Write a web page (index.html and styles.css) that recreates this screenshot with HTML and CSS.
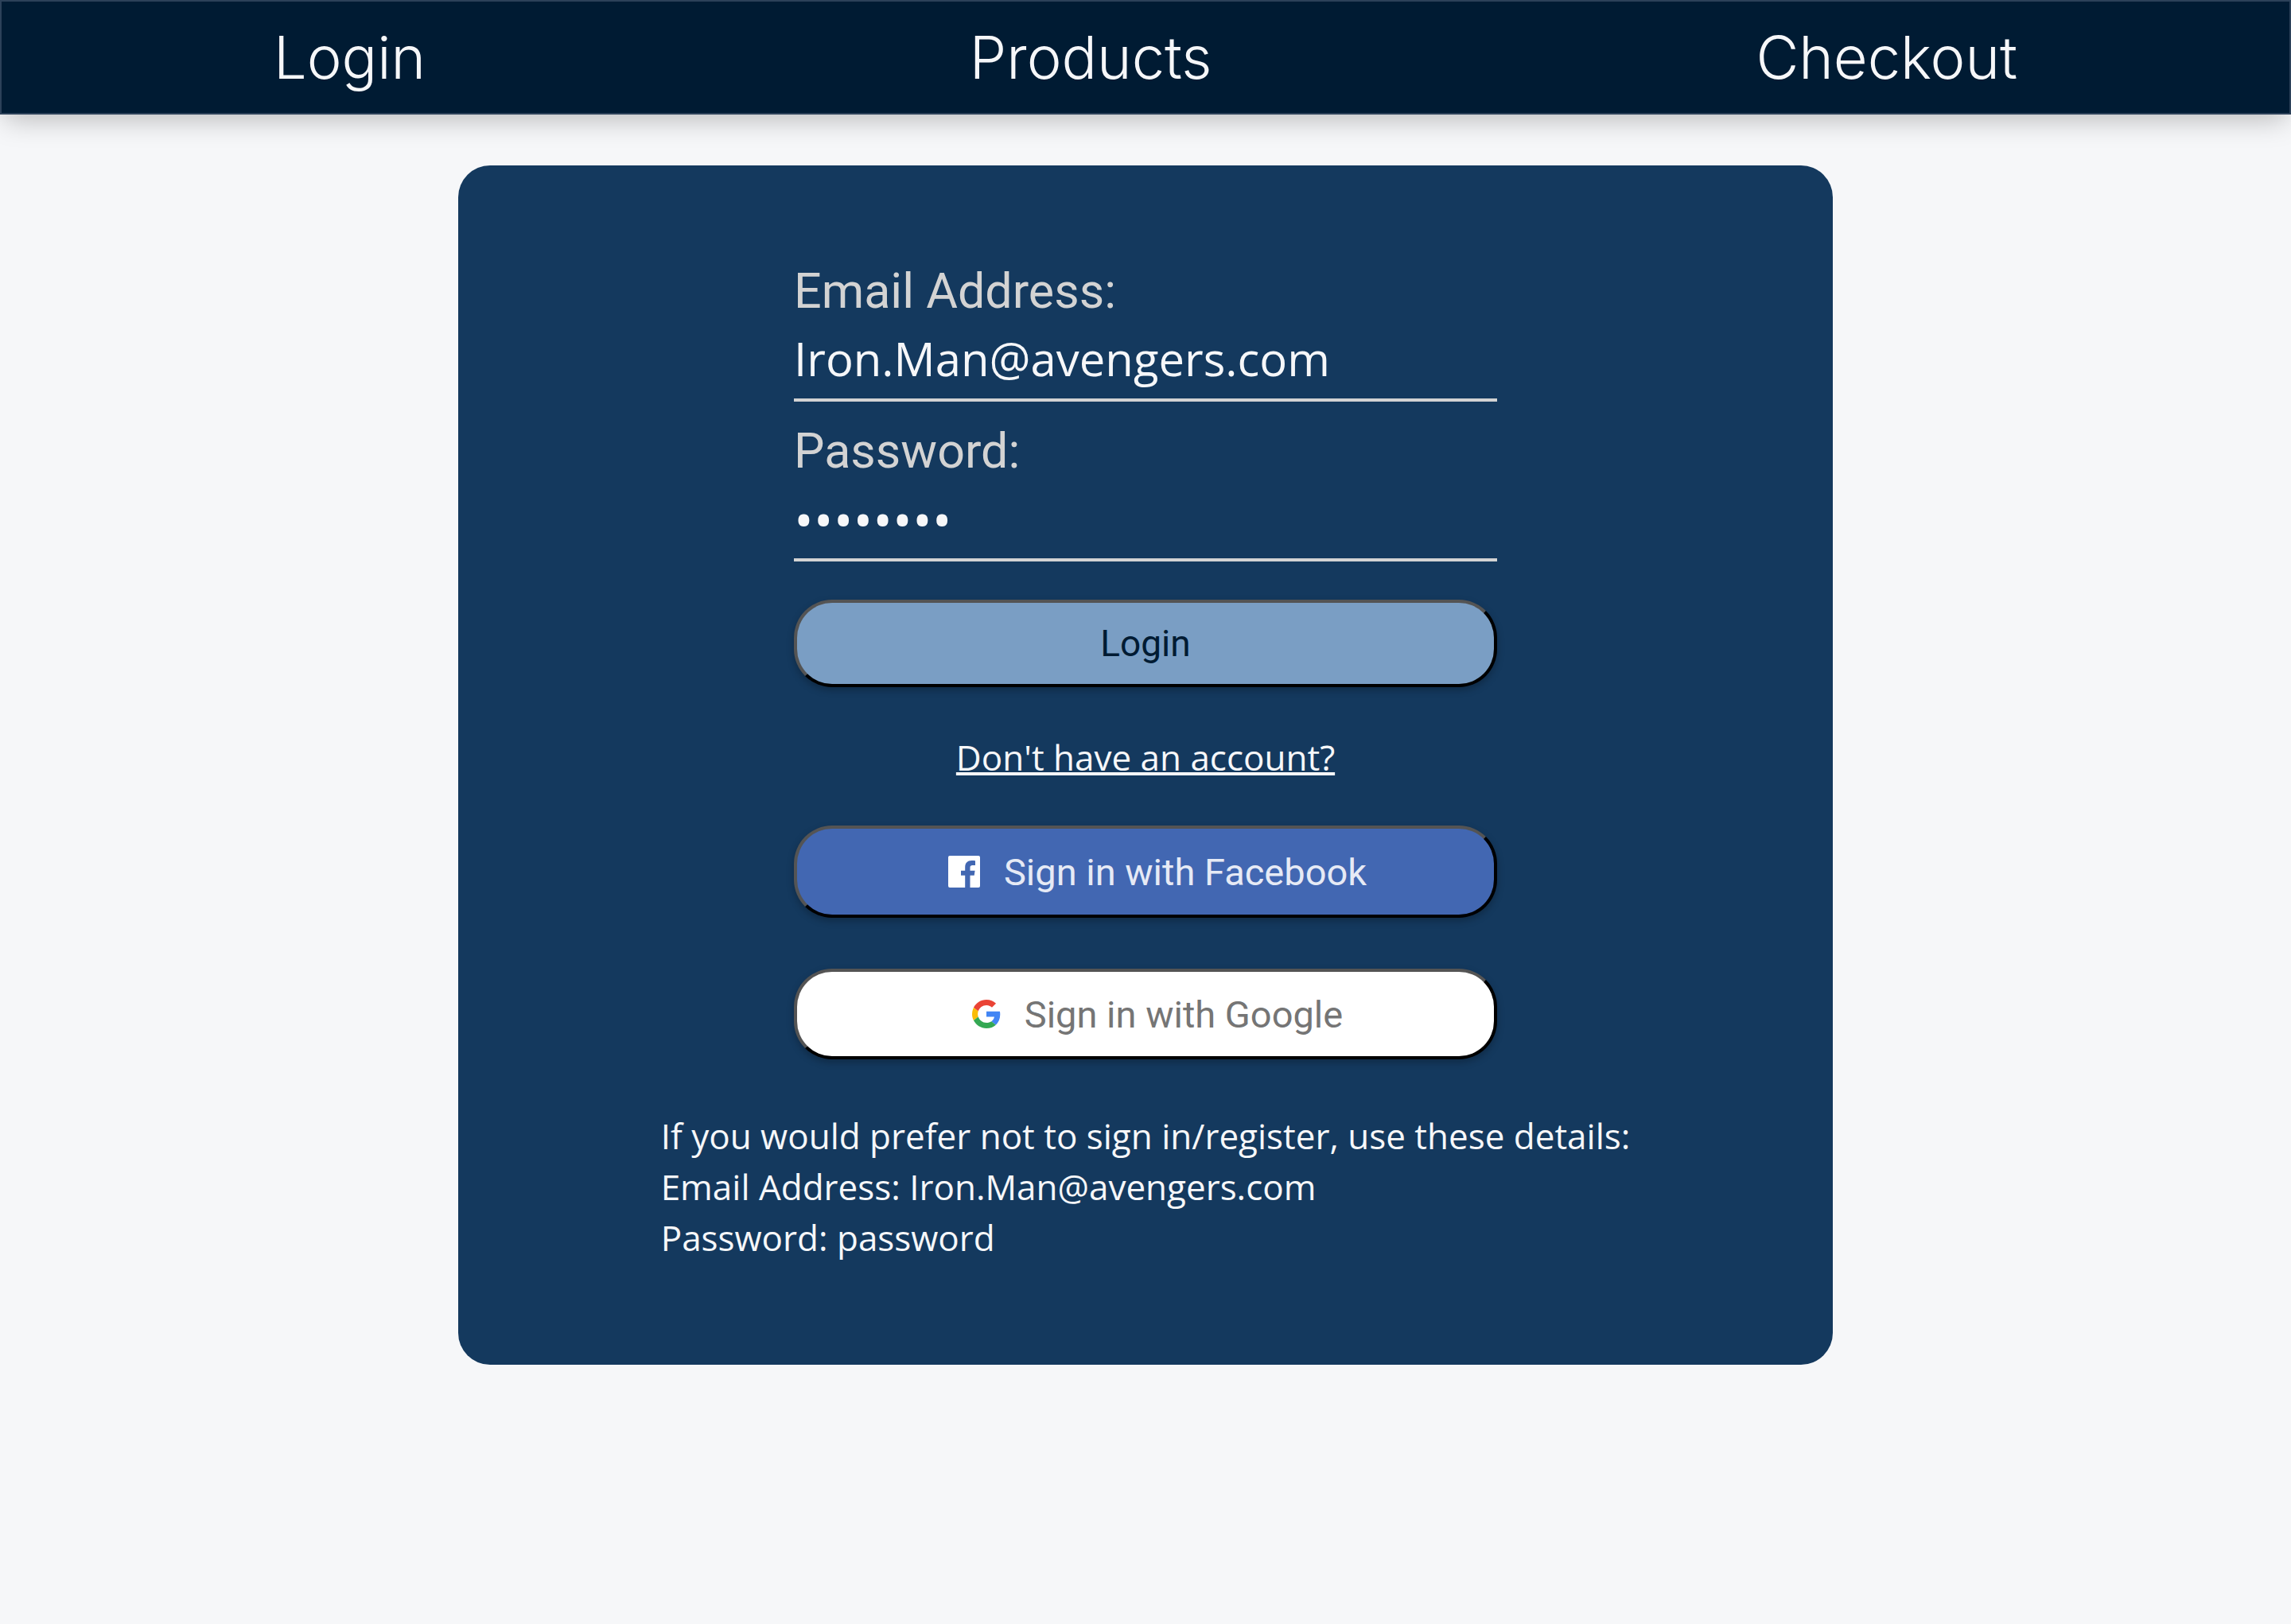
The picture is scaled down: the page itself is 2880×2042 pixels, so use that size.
FILE: index.html
```html
<!DOCTYPE html>
<html lang="en">
<head>
  <meta charset="utf-8">
  <meta name="viewport" content="width=device-width, initial-scale=1">
  <title>Login</title>
  <link rel="stylesheet" href="styles.css">
</head>
<body>
  <nav class="navbar">
    <a class="nav-link" href="#login">Login</a>
    <a class="nav-link" href="#products">Products</a>
    <a class="nav-link" href="#checkout">Checkout</a>
  </nav>
  <main class="card">
    <form class="form">
      <div class="field">
        <label class="label" for="email">Email Address:</label>
        <input class="input" id="email" type="email" value="Iron.Man@avengers.com">
      </div>
      <div class="field">
        <label class="label" for="password">Password:</label>
        <input class="input input-password" id="password" type="password" value="password">
      </div>
      <button class="button button-login" type="submit">Login</button>
      <a class="register" href="#register">Don't have an account?</a>
      <button class="button button-social button-facebook" type="button">
        <svg class="icon-facebook" viewBox="0 0 40 40" aria-hidden="true">
          <path fill="#fff" d="M2 0h36a2 2 0 0 1 2 2v36a2 2 0 0 1-2 2H27.500V24.800h5.200l.9-6.100h-6.100v-3.900c0-1.800.9-2.800 3-2.800H34V6.300C33.300 6.200 31.400 6 29.400 6c-5 0-8.200 3-8.200 8.300v4.400H16v6.100h5.200V40H2a2 2 0 0 1-2-2V2a2 2 0 0 1 2-2z"/>
        </svg>
        <span>Sign in with Facebook</span>
      </button>
      <button class="button button-social button-google" type="button">
        <svg class="icon-google" viewBox="0 0 18 18" aria-hidden="true">
          <path fill="#ea4335" d="M9 3.480c1.690 0 2.830.73 3.480 1.340l2.540-2.480C13.460.89 11.430 0 9 0 5.480 0 2.440 2.020.96 4.960l2.910 2.260C4.600 5.050 6.620 3.480 9 3.480z"/>
          <path fill="#4285f4" d="M17.640 9.200c0-.74-.06-1.280-.19-1.840H9v3.340h4.960c-.1.830-.64 2.080-1.840 2.920l2.840 2.200c1.700-1.570 2.680-3.880 2.680-6.620z"/>
          <path fill="#fbbc05" d="M3.880 10.780A5.540 5.540 0 0 1 3.580 9c0-.62.11-1.220.29-1.780L.96 4.960A9.008 9.008 0 0 0 0 9c0 1.450.35 2.820.96 4.040l2.920-2.260z"/>
          <path fill="#34a853" d="M9 18c2.430 0 4.470-.8 5.960-2.180l-2.840-2.200c-.76.530-1.780.9-3.120.9-2.380 0-4.400-1.570-5.120-3.740L.97 13.040C2.450 15.980 5.480 18 9 18z"/>
        </svg>
        <span>Sign in with Google</span>
      </button>
    </form>
    <p class="details">
      If you would prefer not to sign in/register, use these details:<br>
      Email Address: Iron.Man@avengers.com<br>
      Password: password
    </p>
  </main>
</body>
</html>
```
FILE: styles.css
```css
* {
  box-sizing: border-box;
}

body {
  margin: 0;
  background: #f6f7f9;
  color: #f6f7f9;
  font-family: "Open Sans", "Noto Sans", sans-serif;
  font-size: 44px;
  line-height: 64px;
}

.navbar {
  display: flex;
  justify-content: space-around;
  align-items: center;
  height: 144px;
  border: 2px solid #2c4159;
  background: #001b33;
  box-shadow: 0 12px 32px -6px rgba(0, 0, 0, 0.25);
}

.nav-link {
  color: inherit;
  font-family: Inter, sans-serif;
  font-size: 74px;
  font-weight: 300;
  line-height: 96px;
  text-decoration: none;
}

.card {
  display: flex;
  flex-direction: column;
  align-items: center;
  width: 60%;
  margin: 64px auto;
  padding: 122px 0 128px;
  border-radius: 40px;
  background: #14395e;
}

.form {
  display: flex;
  flex-direction: column;
  width: 884px;
  max-width: 90%;
}

.field {
  display: flex;
  flex-direction: column;
  margin-bottom: 26px;
}

.label {
  color: #d3d3d3;
  font-family: Roboto, sans-serif;
  font-size: 61px;
  line-height: 72px;
}

.input {
  width: 100%;
  height: 103px;
  padding: 0 0 2px;
  border: 0;
  border-bottom: 4px solid #d3d3d3;
  outline: 0;
  background: transparent;
  color: inherit;
  font-family: inherit;
  font-size: 58px;
}

.input-password {
  font-size: 66px;
}

.button {
  height: 110px;
  padding: 0;
  border: 4px outset #000;
  border-radius: 48px;
  box-shadow: 0 4px 10px rgba(0, 0, 0, 0.25);
  font-family: Roboto, sans-serif;
  font-size: 47px;
}

.button-login {
  margin-top: 22px;
  background: #7a9ec4;
  color: #001b33;
  font-size: 46px;
}

.register {
  align-self: center;
  margin: 56px 0 54px;
  color: inherit;
  text-decoration-thickness: 4px;
}

.button-social {
  display: flex;
  justify-content: center;
  align-items: center;
  gap: 30px;
  height: 116px;
  margin-bottom: 64px;
  padding-left: 30px;
}

.button-facebook {
  background: #4267b2;
  color: #e6eaf5;
}

.button-google {
  height: 114px;
  background: #fff;
  color: #757575;
}

.icon-facebook {
  width: 40px;
  height: 40px;
}

.icon-google {
  width: 36px;
  height: 36px;
}

.details {
  margin: 0;
}
```
